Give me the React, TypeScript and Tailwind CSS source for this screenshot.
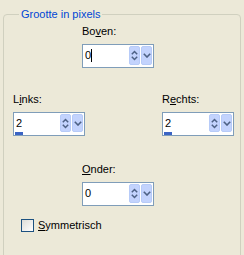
import { ReactNode } from "react"

// up + down arrows stacked, XP style
const UpDownIcon = () => (
  <svg width="7" height="11" viewBox="0 0 7 11">
    <path d="M0.8 4.2 L3.5 1.5 L6.2 4.2" fill="none" stroke="#4D6185" strokeWidth="1.5" />
    <path d="M0.8 6.8 L3.5 9.5 L6.2 6.8" fill="none" stroke="#4D6185" strokeWidth="1.5" />
  </svg>
)

const DownIcon = () => (
  <svg width="8" height="5" viewBox="0 0 8 5">
    <path d="M0.8 0.8 L4 4 L7.2 0.8" fill="none" stroke="#4D6185" strokeWidth="1.6" />
  </svg>
)

interface SpinProps {
  value: string
  caret?: boolean
  bar?: boolean
}

const SpinInput = ({ value, caret, bar }: SpinProps) => (
  <div className="w-[72px] h-[24px] border border-[#7F9DB9] bg-white flex flex-col">
    <div className="flex h-[19px] mt-[1px]">
      <div className="flex-1 flex items-center pl-[2px] text-black">
        <span>{value}</span>
        {caret && <span className="w-[1px] h-[13px] bg-black" />}
      </div>
      <div className="w-[11px] bg-[#C3D3FD] border border-[#B7CBF8] rounded-[2px] flex items-center justify-center">
        <UpDownIcon />
      </div>
      <div className="w-[11px] ml-[1px] mr-[1px] bg-[#C3D3FD] border border-[#B7CBF8] rounded-[2px] flex items-center justify-center">
        <DownIcon />
      </div>
    </div>
    <div className="flex-1 flex items-end pl-[1px]">
      {bar && <div className="w-[8px] h-[3px] bg-[#3B64C4]" />}
    </div>
  </div>
)

const Field = ({ label, children }: { label: ReactNode; children: ReactNode }) => (
  <div className="flex flex-col w-[72px]">
    <span className="leading-[13px] text-black">{label}</span>
    <div className="mt-[6px]">{children}</div>
  </div>
)

export default function App() {
  return (
    <div className="w-[244px] h-[255px] overflow-hidden bg-[#ECE9D8] px-[3px] pt-[8px] font-['Liberation_Sans',sans-serif] text-[11px]">
      <fieldset className="border border-[#D0D0BF] rounded-[4px] h-[300px] pl-[9px] pr-[6px]">
        <legend className="ml-[6px] px-[2px] text-[#0046D5] leading-[13px]">Grootte in pixels</legend>

        {/* Boven */}
        <div className="ml-[69px] mt-[4px]">
          <Field label={<>Bo<u>v</u>en:</>}>
            <SpinInput value="0" caret />
          </Field>
        </div>

        {/* Links / Rechts */}
        <div className="flex justify-between mt-[25px]">
          <Field label={<>L<u>i</u>nks:</>}>
            <SpinInput value="2" bar />
          </Field>
          <Field label={<>R<u>e</u>chts:</>}>
            <SpinInput value="2" bar />
          </Field>
        </div>

        {/* Onder */}
        <div className="ml-[69px] mt-[27px]">
          <Field label={<><u>O</u>nder:</>}>
            <SpinInput value="0" />
          </Field>
        </div>

        <label className="flex items-center mt-[13px] ml-[8px]">
          <span className="w-[13px] h-[13px] border border-[#1C5180] bg-gradient-to-br from-[#DCDCD7] to-white" />
          <span className="ml-[4px] text-black leading-[13px]"><u>S</u>ymmetrisch</span>
        </label>
      </fieldset>
    </div>
  )
}
